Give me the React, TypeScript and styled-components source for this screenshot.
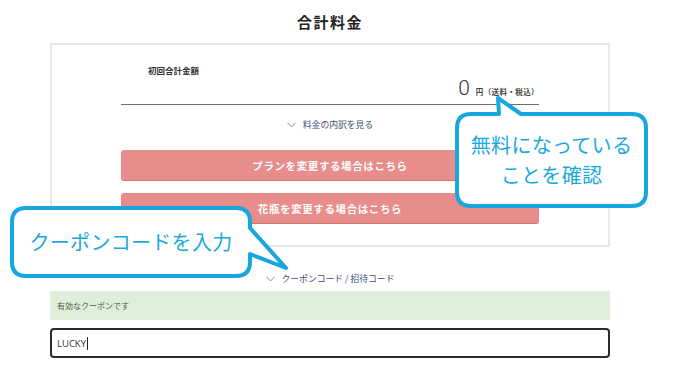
import React from "react";
import styled, { createGlobalStyle } from "styled-components";

const GlobalStyle = createGlobalStyle`
  html, body { margin: 0; padding: 0; background: #ffffff; }
  body {
    font-family: "Noto Sans CJK JP", "Noto Sans", "Liberation Sans", sans-serif;
    color: #333333;
    width: 700px;
    height: 376px;
    overflow: hidden;
  }
`;

const Page = styled.div`
  position: relative;
  width: 700px;
  height: 376px;
`;

const Column = styled.div`
  width: 560px;
  margin-left: 50px;
  display: flex;
  flex-direction: column;
`;

const Title = styled.h1`
  margin: 0;
  padding-top: 12px;
  height: 20px;
  line-height: 20px;
  font-size: 15px;
  font-weight: 700;
  letter-spacing: 1.5px;
  text-align: center;
  color: #222222;
  margin-bottom: 11px;
`;

const Card = styled.section`
  box-sizing: border-box;
  width: 560px;
  border: 2px solid #e8e8e8;
  padding: 19px 69px 21px;
  display: flex;
  flex-direction: column;
`;

const Label = styled.div`
  padding-left: 27px;
  height: 12px;
  line-height: 12px;
  font-size: 8.5px;
  font-weight: 700;
  color: #333333;
`;

const AmountRow = styled.div`
  box-sizing: border-box;
  height: 29px;
  border-bottom: 1px solid #707070;
  display: flex;
  justify-content: flex-end;
  align-items: baseline;
  gap: 6px;
  padding-right: 0;
`;

const Amount = styled.span`
  font-family: "Roboto", "Liberation Sans", sans-serif;
  font-weight: 300;
  font-size: 21px;
  line-height: 24px;
  color: #333333;
`;

const Unit = styled.span`
  font-size: 7.5px;
  font-weight: 700;
  letter-spacing: 0.4px;
  color: #444444;
`;

const Toggle = styled.div<{ $top: number }>`
  margin-top: ${(p) => p.$top}px;
  display: flex;
  justify-content: center;
  align-items: center;
  gap: 7px;
  height: 14px;
  line-height: 14px;
  font-size: 8.8px;
  color: #3f4c78;
`;

const Chevron = styled.svg`
  width: 9px;
  height: 6px;
  flex: none;
`;

const Buttons = styled.div`
  margin-top: 18px;
  display: flex;
  flex-direction: column;
  gap: 12px;
`;

const PinkButton = styled.div`
  height: 31px;
  box-sizing: border-box;
  border-radius: 3px;
  background: #e78d8b;
  border-bottom: 1px solid #d37270;
  color: #ffffff;
  font-size: 10.5px;
  font-weight: 700;
  letter-spacing: 0.6px;
  display: flex;
  align-items: center;
  justify-content: center;
`;

const Notice = styled.div`
  margin-top: 5px;
  height: 29px;
  background: #dfeed9;
  display: flex;
  align-items: center;
  padding-left: 7px;
  font-size: 8px;
  color: #555555;
`;

const CodeField = styled.div`
  margin-top: 8px;
  box-sizing: border-box;
  height: 30px;
  border: 2px solid #2b2b2b;
  border-radius: 4px;
  display: flex;
  align-items: center;
  padding-left: 5px;
  font-family: "Open Sans", "Liberation Sans", sans-serif;
  font-size: 9.5px;
  color: #333333;
`;

const Caret = styled.span`
  display: inline-block;
  width: 1px;
  height: 13px;
  background: #222222;
  margin-left: 1px;
`;

const Bubble = styled.div<{ $left: number; $top: number; $w: number; $h: number }>`
  position: absolute;
  left: ${(p) => p.$left}px;
  top: ${(p) => p.$top}px;
  width: ${(p) => p.$w}px;
  height: ${(p) => p.$h}px;
`;

const BubbleShape = styled.svg`
  position: absolute;
  inset: 0;
  width: 100%;
  height: 100%;
  overflow: visible;
`;

const BubbleText = styled.div<{ $top: number; $left: number; $w: number; $h: number }>`
  position: absolute;
  left: ${(p) => p.$left}px;
  top: ${(p) => p.$top}px;
  width: ${(p) => p.$w}px;
  height: ${(p) => p.$h}px;
  display: flex;
  flex-direction: column;
  align-items: center;
  justify-content: center;
  font-size: 20px;
  line-height: 30px;
  letter-spacing: 0.3px;
  color: #1aa8e0;
  white-space: nowrap;
`;

const ChevronIcon = () => (
  <Chevron viewBox="0 0 9 6">
    <polyline points="0.5,0.8 4.5,5 8.5,0.8" fill="none" stroke="#8a8a8a" strokeWidth="1" />
  </Chevron>
);

export default function App() {
  return (
    <Page>
      <GlobalStyle />
      <Column>
        <Title>合計料金</Title>
        <Card>
          <Label>初回合計金額</Label>
          <AmountRow>
            <Amount>0</Amount>
            <Unit>円（送料・税込）</Unit>
          </AmountRow>
          <Toggle $top={13}>
            <ChevronIcon />
            <span>料金の内訳を見る</span>
          </Toggle>
          <Buttons>
            <PinkButton>プランを変更する場合はこちら</PinkButton>
            <PinkButton>花瓶を変更する場合はこちら</PinkButton>
          </Buttons>
        </Card>
        <Toggle $top={25}>
          <ChevronIcon />
          <span>クーポンコード / 招待コード</span>
        </Toggle>
        <Notice>有効なクーポンです</Notice>
        <CodeField>
          LUCKY
          <Caret />
        </CodeField>
      </Column>

      <Bubble $left={453} $top={92} $w={197} $h={118}>
        <BubbleShape viewBox="0 0 197 118">
          <path
            d="M 18 22 L 46 22 L 45 6 L 68 22 L 179 22 Q 193 22 193 36 L 193 100 Q 193 114 179 114 L 18 114 Q 4 114 4 100 L 4 36 Q 4 22 18 22 Z"
            fill="#ffffff"
            stroke="#16a7e0"
            strokeWidth="4"
            strokeLinejoin="round"
          />
        </BubbleShape>
        <BubbleText $left={4} $top={22} $w={189} $h={92}>
          <span>無料になっている</span>
          <span>ことを確認</span>
        </BubbleText>
      </Bubble>

      <Bubble $left={8} $top={204} $w={282} $h={76}>
        <BubbleShape viewBox="0 0 282 76">
          <path
            d="M 18 4 L 228 4 Q 242 4 242 18 L 242 24 L 278 64 L 242 50 L 242 58 Q 242 72 228 72 L 18 72 Q 4 72 4 58 L 4 18 Q 4 4 18 4 Z"
            fill="#ffffff"
            stroke="#16a7e0"
            strokeWidth="4"
            strokeLinejoin="round"
          />
        </BubbleShape>
        <BubbleText $left={4} $top={4} $w={238} $h={68}>
          <span>クーポンコードを入力</span>
        </BubbleText>
      </Bubble>
    </Page>
  );
}
